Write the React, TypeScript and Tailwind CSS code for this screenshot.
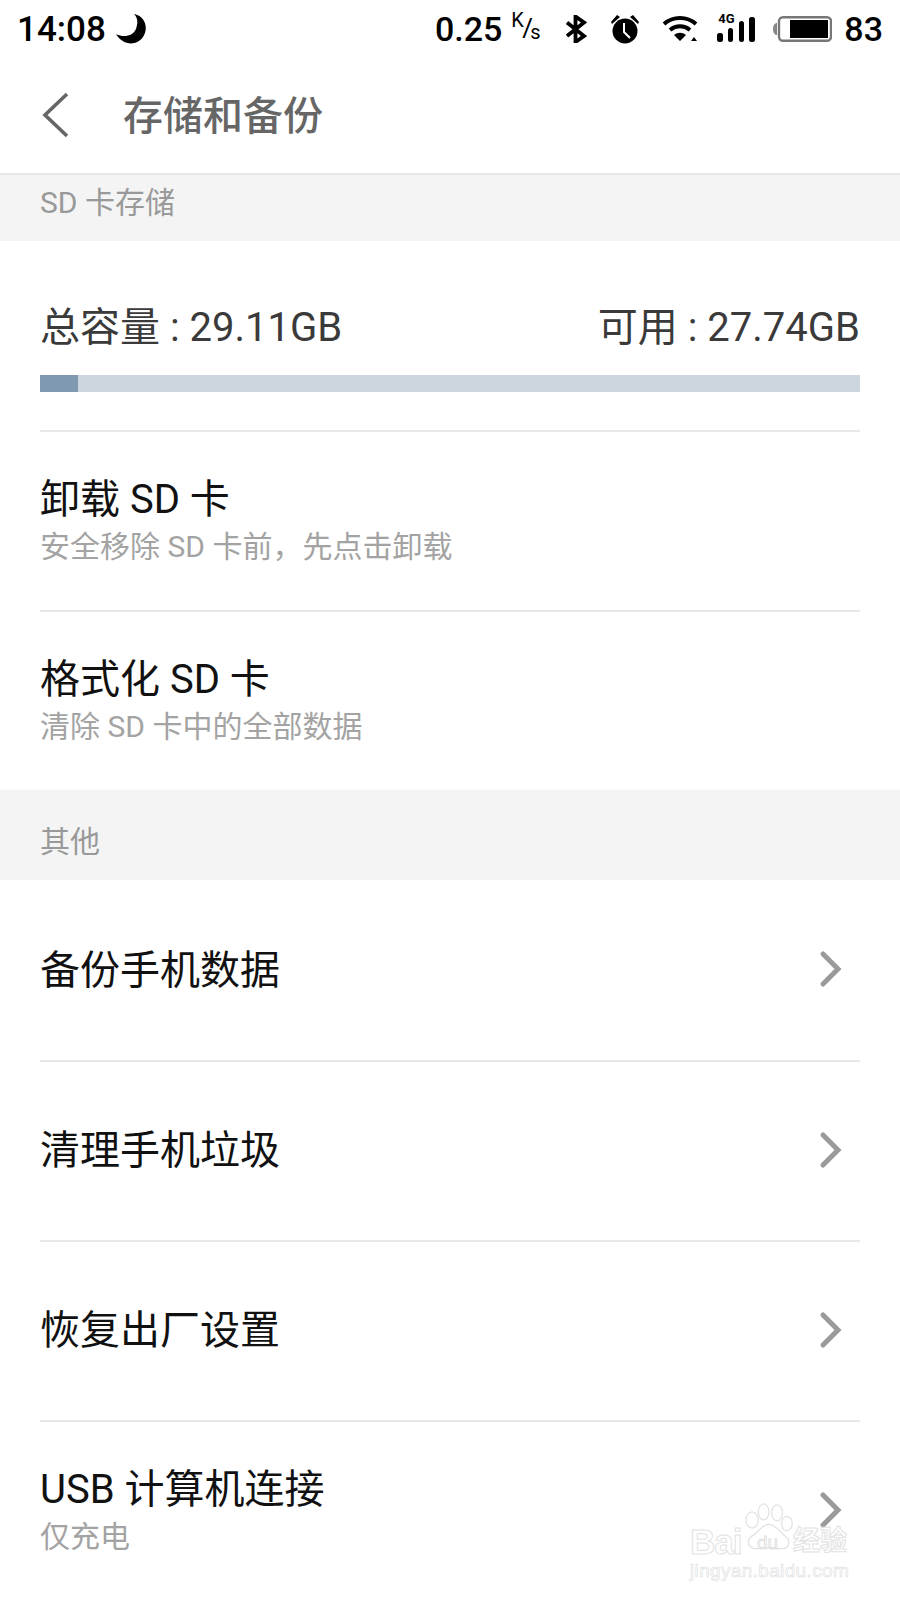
import React from "react";

const font = { fontFamily: '"Roboto","Noto Sans CJK SC",sans-serif' };

function Chevron() {
  return (
    <svg width="24" height="38" viewBox="0 0 24 38" className="shrink-0">
      <path d="M5 4 L20 19 L5 34" fill="none" stroke="#9a9a9a" strokeWidth="5" strokeLinecap="round" />
    </svg>
  );
}

function Row({ title, sub, chevron, h = "h-[180px]", border = true, textPad = "pt-[2px]" }: { title: string; sub?: string; chevron?: boolean; h?: string; border?: boolean; textPad?: string }) {
  return (
    <div className={`${h} flex items-center justify-between ${border ? "border-b-2 border-[#e8e8e8]" : ""}`}>
      <div className={`flex flex-col ${textPad}`}>
        <div className="text-[40px] leading-[50px] text-[#111111]">{title}</div>
        {sub && <div className="text-[30px] leading-[44px] text-[#a3a3a3]">{sub}</div>}
      </div>
      {chevron && <div className="pr-[18px] pb-[2px] flex items-center"><Chevron /></div>}
    </div>
  );
}

function StatusBar() {
  return (
    <div className="h-[58px] flex items-center justify-between pl-[17px] pr-[17px] text-black text-[34px] font-medium">
      <div className="flex items-center gap-[9px]">
        <span className="text-[35px] pt-[2px]">14:08</span>
        <svg width="32" height="32" viewBox="0 0 32 32">
          <path d="M19 1 C30 3 34 15 28 24 C22 33 8 33 1 21 C9 25 18 23 21 16 C23 10 23 5 19 1 Z" fill="#000" />
        </svg>
      </div>
      <div className="flex items-center">
        <span>0.25</span>
        <span className="relative w-[31px] h-[40px] ml-[9px] text-[20px] font-normal">
          <span className="absolute left-0 top-[-4px]">K</span>
          <span className="absolute left-[11px] top-[0px] text-[26px]">/</span>
          <span className="absolute left-[19px] top-[8px]">s</span>
        </span>
        <svg width="22" height="28" viewBox="0 0 22 28" className="ml-[23px]">
          <path d="M2 7.5 L19 21 L10.5 27 V1.5 L19 7.5 L2 21" fill="none" stroke="#000" strokeWidth="3.8" />
        </svg>
        <svg width="30" height="30" viewBox="0 0 30 30" className="ml-[23px]">
          <circle cx="15" cy="17" r="12.5" fill="#000" />
          <path d="M14 9 V18 L20 24" fill="none" stroke="#fff" strokeWidth="2" />
          <path d="M1 8 L7 1 L10 3 L2 10 Z M29 8 L23 1 L20 3 L28 10 Z" fill="#000" />
        </svg>
        <svg width="36" height="26" viewBox="0 0 36 26" className="ml-[22px]">
          <path d="M2 8 C11 0 25 0 34 8" fill="none" stroke="#000" strokeWidth="4" />
          <path d="M8 14 C14 9 22 9 28 14" fill="none" stroke="#000" strokeWidth="4" />
          <path d="M12 19 L18 25 L24 19 C20 16 16 16 12 19 Z M29 25 L32 21 L35 25 Z" fill="#000" />
        </svg>
        <span className="relative w-[41px] h-[28px] ml-[18px]">
          <span className="absolute left-[2px] top-[-3px] text-[13px] leading-[14px] font-bold">4G</span>
          <svg width="41" height="28" viewBox="0 0 41 28" className="absolute left-0 top-0">
            <rect x="1" y="18" width="6" height="9" rx="2.5" fill="#000" />
            <rect x="12" y="13" width="5" height="14" rx="2.5" fill="#000" />
            <rect x="23" y="6" width="5" height="21" rx="2.5" fill="#000" />
            <rect x="33" y="2" width="6" height="25" rx="2.5" fill="#000" />
          </svg>
        </span>
        <svg width="59" height="26" viewBox="0 0 59 26" className="ml-[16px]">
          <path d="M0 13 C0 9 2 7 4 7 V19 C2 19 0 17 0 13 Z" fill="#888" />
          <rect x="6" y="1.2" width="52" height="23.6" rx="4" fill="none" stroke="#777" strokeWidth="2.4" />
          <rect x="17" y="4" width="38" height="18" fill="#000" />
        </svg>
        <span className="ml-[12px]">83</span>
      </div>
    </div>
  );
}

function Watermark() {
  const outline = { WebkitTextStroke: "1px #e2e2e2", color: "transparent" } as React.CSSProperties;
  return (
    <div className="absolute left-[690px] top-[1502px] w-[170px] h-[80px] pointer-events-none" style={{ fontFamily: '"Liberation Sans","Noto Sans CJK SC",sans-serif' }}>
      <span className="absolute left-0 top-[20px] text-[35px] leading-[40px] font-bold tracking-[-1px]" style={outline}>Bai</span>
      <svg width="50" height="50" viewBox="0 0 56 56" className="absolute left-[54px] top-[1px]">
        <g fill="none" stroke="#e2e2e2" strokeWidth="1.4">
          <ellipse cx="9" cy="19" rx="7" ry="9" />
          <ellipse cx="22" cy="10" rx="6" ry="9" />
          <ellipse cx="37" cy="11" rx="6" ry="9" />
          <ellipse cx="48" cy="23" rx="6" ry="8" />
          <path d="M28 24 C20 24 16 33 9 37 C1 43 6 52 15 51 C23 50 33 50 41 51 C51 52 53 42 46 37 C40 33 36 24 28 24 Z" />
        </g>
      </svg>
      <span className="absolute left-[67px] top-[30px] text-[19px] leading-[22px]" style={outline}>du</span>
      <span className="absolute left-[103px] top-[22px] text-[27px] leading-[34px] font-bold" style={outline}>经验</span>
      <span className="absolute left-0 top-[58px] text-[19px] leading-[22px] tracking-[0.35px]" style={{ ...outline, WebkitTextStroke: "0.7px #e2e2e2" }}>jingyan.baidu.com</span>
    </div>
  );
}

export default function App() {
  return (
    <div className="relative w-[900px] h-[1600px] overflow-hidden bg-white" style={font}>
      <StatusBar />
      <div className="h-[117px] flex items-center border-b-2 border-[#e6e6e6]">
        <svg width="30" height="46" viewBox="0 0 30 46" className="ml-[41px] mb-[2px]">
          <path d="M26 2 L4 23 L26 44" fill="none" stroke="#666666" strokeWidth="3.6" />
        </svg>
        <span className="ml-[52px] pt-[2px] text-[40px] font-medium text-[#666666]">存储和备份</span>
      </div>
      <div className="h-[66px] bg-[#f4f4f4] pl-[40px] pt-[7px] text-[30px] leading-[42px] text-[#999999]">SD 卡存储</div>
      <div className="px-[40px]">
        <div className="h-[191px] border-b-2 border-[#e8e8e8] pt-[62px]">
          <div className="flex justify-between text-[40px] leading-[50px] text-[#3a3a3a]">
            <span>总容量 : 29.11GB</span>
            <span>可用 : 27.74GB</span>
          </div>
          <div className="mt-[22px] h-[17px] bg-[#cdd6de]">
            <div className="h-full w-[38px] bg-[#7f99b3]" />
          </div>
        </div>
        <Row title="卸载 SD 卡" sub="安全移除 SD 卡前，先点击卸载" />
        <Row title="格式化 SD 卡" sub="清除 SD 卡中的全部数据" h="h-[178px]" border={false} />
      </div>
      <div className="h-[90px] bg-[#f4f4f4] pl-[40px] pt-[31px] text-[30px] leading-[42px] text-[#999999]">其他</div>
      <div className="px-[40px]">
        <Row title="备份手机数据" chevron h="h-[182px]" />
        <Row title="清理手机垃圾" chevron textPad="pt-0" />
        <Row title="恢复出厂设置" chevron textPad="pt-0" />
        <Row title="USB 计算机连接" sub="仅充电" chevron h="h-[178px]" border={false} />
      </div>
      <Watermark />
    </div>
  );
}
